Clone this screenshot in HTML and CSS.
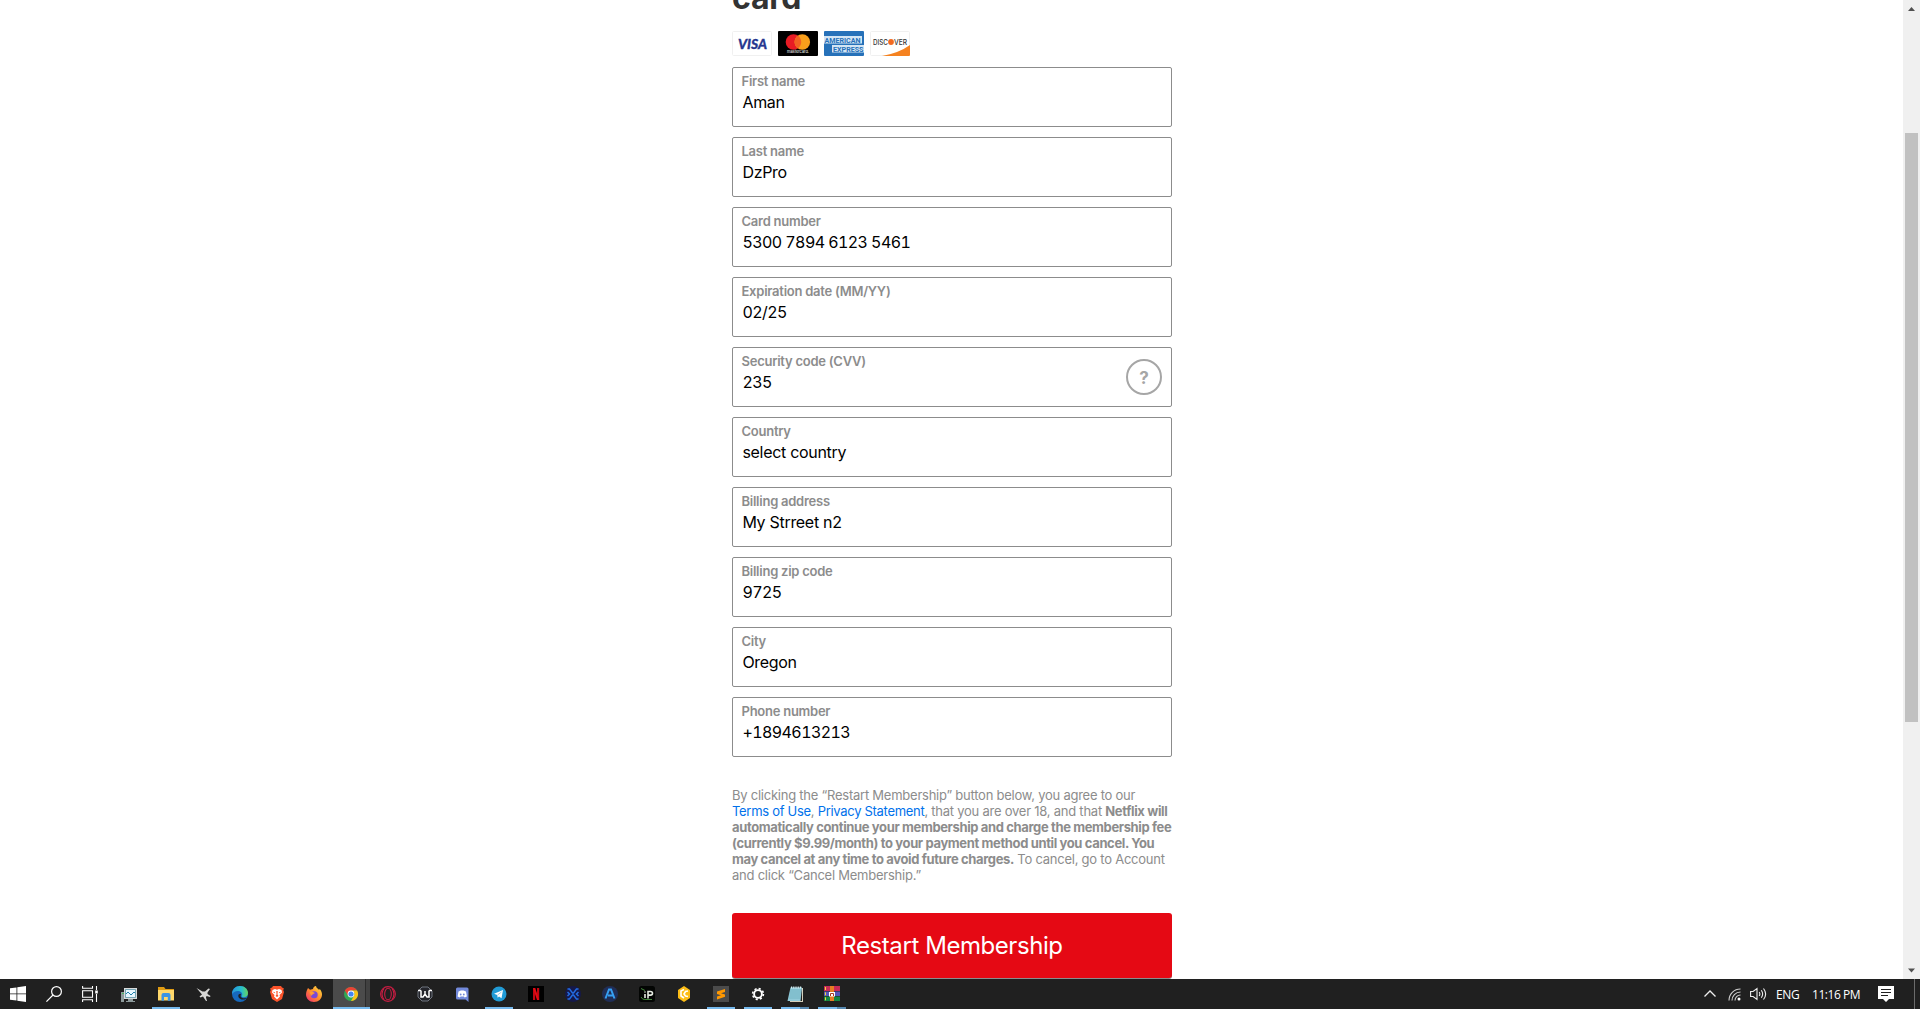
FILE: index.html
```html
<!DOCTYPE html>
<html lang="en">
<head>
<meta charset="utf-8">
<title>Restart Membership</title>
<link rel="stylesheet" href="styles.css">
</head>
<body>
<div class="browser">
<main class="content">
  <div class="column">
    <h1 class="title">card</h1>
    <div class="cards">
      <svg class="card" viewBox="0 0 40 25"><rect x=".5" y=".5" width="39" height="24" rx="1" fill="#fff" stroke="#f0f0f0"/><text x="6" y="17.500" class="visa" textLength="29" lengthAdjust="spacingAndGlyphs">VISA</text></svg>
      <svg class="card" viewBox="0 0 40 25"><rect width="40" height="25" rx="1"/><circle cx="15.500" cy="11" r="7.800" fill="#e81b24"/><circle cx="24.300" cy="11" r="7.800" fill="#f99f1b"/><path d="M19.900 4.600a7.800 7.800 0 0 1 0 12.800a7.800 7.800 0 0 1 0-12.800" fill="#f26122"/><text x="9" y="22.300" class="mastercard" textLength="22" lengthAdjust="spacingAndGlyphs">mastercard.</text></svg>
      <svg class="card" viewBox="0 0 40 25"><rect width="40" height="25" rx="1" fill="#2671b9"/><path d="M0 5H38V12.500H0zM8 14H40V21.500H8z" fill="#d3e5f4"/><text x=".5" y="11.800" class="amex" textLength="36" lengthAdjust="spacingAndGlyphs">AMERICAN</text><text x="9" y="20.700" class="amex" textLength="30.500" lengthAdjust="spacingAndGlyphs">EXPRESS</text></svg>
      <svg class="card" viewBox="0 0 40 25"><rect x=".5" y=".5" width="39" height="24" rx="1" fill="#fff" stroke="#f0f0f0"/><path d="M12 25Q29 22 40 14v10q0 1-1 1z" fill="#f58220"/><text x="3" y="13.700" class="discover" textLength="15" lengthAdjust="spacingAndGlyphs">DISC</text><circle cx="21" cy="11" r="2.900" fill="#f26a21"/><text x="24" y="13.700" class="discover" textLength="13" lengthAdjust="spacingAndGlyphs">VER</text></svg>
    </div>
    <div class="fields">
      <div class="field"><span class="label">First name</span><span class="value">Aman</span></div>
      <div class="field"><span class="label">Last name</span><span class="value">DzPro</span></div>
      <div class="field"><span class="label">Card number</span><span class="value digits">5300 7894 6123 5461</span></div>
      <div class="field"><span class="label">Expiration date (MM/YY)</span><span class="value digits">02/25</span></div>
      <div class="field"><span class="label">Security code (CVV)</span><span class="value digits">235</span><span class="help">?</span></div>
      <div class="field"><span class="label">Country</span><span class="value">select country</span></div>
      <div class="field"><span class="label">Billing address</span><span class="value">My Strreet n2</span></div>
      <div class="field"><span class="label">Billing zip code</span><span class="value digits">9725</span></div>
      <div class="field"><span class="label">City</span><span class="value">Oregon</span></div>
      <div class="field"><span class="label">Phone number</span><span class="value digits">+1894613213</span></div>
    </div>
    <p class="legal">By clicking the “Restart Membership” button below, you agree to our<br>
      <span class="link">Terms of Use</span>, <span class="link">Privacy Statement</span>, that you are over 18, and that <b>Netflix will<br>
      automatically continue your membership and charge the membership fee<br>
      (currently $9.99/month) to your payment method until you cancel. You<br>
      may cancel at any time to avoid future charges.</b> To cancel, go to Account<br>
      and click “Cancel Membership.”</p>
    <div class="button">Restart Membership</div>
  </div>
</main>
<div class="scrollbar">
  <svg width="17" height="17" viewBox="0 0 17 17"><path d="M5 11L8.500 7L12 11z" fill="#505050"/></svg>
  <div class="track"><div class="thumb"></div></div>
  <svg width="17" height="17" viewBox="0 0 17 17"><path d="M5 6.500h7L8.500 10.500z" fill="#505050"/></svg>
</div>
</div>
<div class="taskbar">
  <div class="system">
    <span class="cell"><svg viewBox="0 0 16 16"><path fill="#fff" d="M0 2.300L6.500 1.400V7.500H0zM7.300 1.300L16 0V7.500H7.300zM0 8.300H6.500V14.500L0 13.700zM7.300 8.300H16V16L7.300 14.700z"/></svg></span>
    <span class="cell"><svg viewBox="0 0 16 16"><g fill="none" stroke="#fff" stroke-width="1.200"><circle cx="10.500" cy="5.500" r="4.900"/><path d="M7 9L.4 15.600"/></g></svg></span>
    <span class="cell"><svg viewBox="0 0 16 16"><g fill="none" stroke="#fff" stroke-width="1.100"><path d="M.6 0v2.300H10.500V0M.6 4.800H10.500V11.200H.6zM.6 16v-2.300H10.500V16M14.500 0v4M14.500 8v8"/></g><path fill="#fff" d="M13.200 4.500h2.600v3h-2.600z"/></svg></span>
  </div>
  <div class="apps">
    <span class="cell"><svg viewBox="0 0 16 16"><path fill="#8e9b9c" d="M0 6h3v10H0zM7 13h5v2h2v1H5v-1h2z"/><path fill="#4ab35a" d="M1 7h2v1H1z"/><path fill="#d9dcdc" d="M3 2h13v11H3z"/><path fill="#e9f8ff" stroke="#48869b" stroke-width=".7" d="M4.500 3.500h10v8h-10z"/><path d="M5 8l2-2 3 3 3-3 1 1" fill="none" stroke="#2483ad"/></svg></span>
    <span class="cell open"><svg viewBox="0 0 16 16"><path fill="#e09c13" d="M0 1h6l1.500 2H16v3H0z"/><path fill="#ffd86b" d="M0 4h16v10.500H0z"/><path fill="#3b94e4" d="M3.500 14.800V9q0-2 2-2h5q2 0 2 2v5.800H9.800V11H6v3.800z"/></svg></span>
    <span class="cell"><svg viewBox="0 0 16 16"><path fill="#d7d7d5" d="M1.500 2L7.500 5.500L10 5.500L13.500 2.500L15 3L12.500 6.500L12.500 8L15.500 10L15 11L11.500 10L11 11.500L12 15L11 15L8 10.500L5.500 11.500L4.500 10.500L7 8.500z"/></svg></span>
    <span class="cell"><svg viewBox="0 0 16 16"><defs><linearGradient id="edge"><stop stop-color="#2694dc"/><stop offset=".6" stop-color="#28c0ca"/><stop offset="1" stop-color="#68d35a"/></linearGradient></defs><circle cx="8" cy="8" r="8" fill="#1769bd"/><path fill="url(#edge)" d="M0 8C0 3.500 3.500 0 8 0c5 0 8 3.500 8 7 0 3-2 4.300-4.300 4.300-1.700 0-2.700-.8-1.700-2C11 7.500 9 5 6 5 3 5 1 6.500 0 8"/><path fill="#202020" d="M9 8.500c-1.500 2 1 5 6 3.400L13.800 13C9.500 14.500 6 12.500 6.300 9.500 6.500 8 8.800 7 9 8.500"/></svg></span>
    <span class="cell"><svg viewBox="0 0 16 16"><path fill="#fb542b" d="M4 0h8l1 1.500 1.800.8-.5 2L15 6l-2 7-5 3-5-3L1 6l.7-1.700-.5-2L3 1.500z"/><path fill="#fff" d="M3.500 4L6 3l2 .7L10 3l2.500 1L13 6.500 10.500 9l.5 1.500-3 3-3-3L5.500 9 3 6.500z"/><path fill="#fb542b" d="M7.300 5h1.400L8.500 8.500 9.500 10 8 11 6.500 10l1-1.500zM4.300 5.700l2 .6-1.300.9zM11.700 5.700l-2 .6 1.300.9z"/></svg></span>
    <span class="cell"><svg viewBox="0 0 16 16"><defs><linearGradient id="ff" x1="1" y1="0" x2="0" y2="1"><stop stop-color="#ffe743"/><stop offset=".5" stop-color="#ff8b2b"/><stop offset="1" stop-color="#ee237a"/></linearGradient></defs><path fill="url(#ff)" d="M2 2l2 1.800L7 3C7 1.500 8.500 0 10 0l.5 1.500C11.500 2.500 12.500 3 13 4l.8-1C15.500 5 16 7 16 8.500 16 13 12.500 16 8 16S0 12.500 0 8.500C0 6 1 4 2 2"/><circle cx="8.200" cy="8.700" r="3.500" fill="#7949d8"/><path fill="#ff9c32" d="M3.500 5.500l3 .2L9 7 6.500 8.500 5 10z"/></svg></span>
    <span class="cell active"><svg viewBox="0 0 16 16"><circle cx="8" cy="8" r="7" fill="#31a853"/><path fill="#ea4335" d="M1.900 4.500A7 7 0 0 1 14.100 4.500H8L5 9.800z"/><path fill="#fbc116" d="M14.100 4.500A7 7 0 0 1 8 15l3-5.200a3.500 3.500 0 0 0-3-5.300z"/><circle cx="8" cy="8" r="3.400" fill="#fff"/><circle cx="8" cy="8" r="2.600" fill="#4285f4"/></svg></span>
    <span class="cell"><svg viewBox="0 0 16 16"><g fill="none" stroke="#c91d43" stroke-width="1.100"><circle cx="8" cy="8" r="7.400"/><ellipse cx="8" cy="8" rx="3.300" ry="5.800"/><path d="M4 2.500Q0 8 4 13.500M12 2.500Q16 8 12 13.500"/></g></svg></span>
    <span class="cell"><svg viewBox="0 0 16 16"><path fill="#24252b" stroke="#79808b" stroke-width=".9" d="M5 1h6l4 4v6l-4 4H5l-4-4V5z"/><path d="M1 4.500h3M12 4.500h3M4 4.500V11h2l2-3 2 3h2V4.500M8 5v3" fill="none" stroke="#fff" stroke-width="1.500"/></svg></span>
    <span class="cell"><svg viewBox="0 0 16 16"><path fill="#7289da" d="M3.500 1.500h9.500q1.500 0 1.500 1.500v13l-3-2.500h-8Q2 13.500 2 12V3q0-1.500 1.500-1.500"/><path fill="#fff" d="M4.500 5.500L7 4.600h2.500l2.500.9.900 5-2.200 1-.8-1H6.600l-.8 1-2.200-1z"/><circle cx="6.700" cy="8.500" r=".9" fill="#7289da"/><circle cx="9.800" cy="8.500" r=".9" fill="#7289da"/></svg></span>
    <span class="cell open"><svg viewBox="0 0 16 16"><circle cx="8" cy="8" r="7.500" fill="#219bd6"/><path fill="#fff" d="M3 7.800L12 4l-1.500 8.300L8 10.500l-1.300 1.200-.5-2.700z"/><path d="M6.500 9L10.500 6" stroke="#9ccbe5"/></svg></span>
    <span class="cell"><svg viewBox="0 0 16 16"><path d="M0 0h16v16H0z"/><path fill="#c10711" d="M5 2h2.200v12H5zM9 2h2.200v12H9z"/><path fill="#e50914" d="M5 2h2.200l4 12H9z"/></svg></span>
    <span class="cell"><svg viewBox="0 0 16 16"><circle cx="8" cy="8" r="8" fill="#15194a"/><g fill="none" stroke="#236ce2" stroke-width="1.500"><path d="M2.500 3h2l3 4h1l3-4h2M2.500 13h2l3-4h1l3 4h2M2.500 6l2 2-2 2M13.500 6l-2 2 2 2"/></g></svg></span>
    <span class="cell"><svg viewBox="0 0 16 16"><circle cx="8" cy="8" r="8" fill="#202e57"/><path d="M3.500 12.500L7 3.500h2l3.500 9M6 9.500h5" fill="none" stroke="#36a0f3" stroke-width="2"/></svg></span>
    <span class="cell"><svg viewBox="0 0 16 16"><rect width="16" height="16" rx="2.500" fill="#030503"/><path d="M6 5.500v1M6 8v4M9 12.500V5.500h2.500q2 0 2 1.800t-2 1.800H9" fill="none" stroke="#e5eae1" stroke-width="1.600"/><path d="M2 2.500l4 2M2 11q1 3 5 2.500h6" stroke="#438a3c" fill="none"/></svg></span>
    <span class="cell"><svg viewBox="0 0 16 16"><path fill="#fdbd16" d="M8 0l6 4v8l-6 4-6-4V4z"/><path fill="none" stroke="#fff" stroke-width="1.600" d="M8 3.500L5 5v5l3 2M12 5L9.500 5.500 8 8l1.500 2 2.500.5"/></svg></span>
    <span class="cell open"><svg viewBox="0 0 16 16"><path fill="#4b4b4b" d="M0 0h16v16H0z"/><path fill="#ff9800" d="M4 5.500L12 3v3L8 7.300l4 1.300v2.200L4 13.500v-3l4-1.200-4-1.300z"/></svg></span>
    <span class="cell open"><svg viewBox="0 0 16 16"><circle cx="8" cy="8" r="3.900" fill="none" stroke="#fff" stroke-width="1.900"/><circle cx="8" cy="8" r="5.400" fill="none" stroke="#fff" stroke-width="1.600" stroke-dasharray="2.120 2.120"/></svg></span>
    <span class="cell open stacked"><svg viewBox="0 0 16 16"><path fill="#d5d1be" d="M3 15h12V2h1v14H3z"/><path fill="#91cad9" d="M3.500 1.500H15L13.500 15H.5z"/><path stroke="#569eaf" stroke-width=".5" d="M3 4h11M3 6h11M2.500 8h11M2.500 10h11M2 12h11"/><path stroke="#d8eff4" stroke-dasharray="1 .8" stroke-width="2" d="M4 1.500h11"/></svg></span>
    <span class="cell open stacked"><svg viewBox="0 0 16 16"><path fill="#c72b57" d="M0 0h16v5H0z"/><path fill="#5455b8" d="M0 5.500h16v4.500H0z"/><path fill="#138643" d="M0 10.500h16V15H0z"/><path fill="#e77d23" d="M6 0h4v15H6z"/><path d="M1.500 1v3M1.500 6.300v3M1.500 11.300v3" stroke="#f7d33d"/><path fill="#fff" d="M5 6h6v4.500H5z"/><path fill="none" stroke="#a63b24" d="M6.500 10V7.500h3V10"/></svg></span>
  </div>
  <div class="tray">
    <svg width="12" height="16" viewBox="0 0 12 16"><path d="M.5 10.500L6 5l5.500 5.500" fill="none" stroke="#eee" stroke-width="1.300"/></svg>
    <svg width="13" height="16" viewBox="0 0 13 16"><g fill="none" stroke="#d0d0d0" stroke-width="1.100"><path d="M1 14.500C1 8 6 3 12.500 3M4 14.500C4 10 7.500 6 12.500 6M7 14.500c0-3 2.500-5.500 5.500-5.500"/></g><circle cx="11" cy="13" r="1.500" fill="#fff"/></svg>
    <svg width="17" height="16" viewBox="0 0 17 16"><g fill="none" stroke="#eee" stroke-width="1.100"><path d="M.6 5.500h2.500L7 2.500v11L3.100 10.500H.6zM9.200 6q1.300 2 0 4M11.300 4.200q2.700 3.800 0 7.600M13.500 2.500q4.300 5.500 0 11"/></g></svg>
    <span class="lang">ENG</span>
    <span class="clock">11:16 PM</span>
    <svg width="16" height="16" viewBox="0 0 16 16"><path fill="#fff" d="M0 0h16v13h-5l-3 3-3-3H0z"/><path d="M3 3.500h10M3 6.500h10M3 9.500h7" stroke="#202020"/></svg>
    <span class="peek"></span>
  </div>
</div>
</body>
</html>
```
FILE: styles.css
```css
body {
  margin: 0;
  width: 1920px;
  height: 1009px;
  overflow: hidden;
  display: flex;
  flex-direction: column;
  background: #fff;
  font-family: Inter, sans-serif;
}

.browser { flex: 1; min-height: 0; display: flex; overflow: hidden; }
.content { flex: 1; padding-left: 732px; overflow: hidden; }
.column { width: 440px; }

.title {
  margin: -22px 0 0;
  font-size: 32px;
  line-height: 40px;
  letter-spacing: -0.2px;
  color: #333;
}

.cards { display: flex; gap: 6px; margin: 13px 0 11px; }
.card { display: block; width: 40px; height: 25px; }
.visa { font: italic 900 13px Lato, sans-serif; fill: #26368f; stroke: #26368f; stroke-width: 0.3px; }
.mastercard { font: 4px Inter, sans-serif; fill: #fff; }
.amex { font: bold 8px Roboto, sans-serif; fill: #2671b9; }
.discover { font: 500 7px Inter, sans-serif; fill: #333; }

.fields { display: grid; gap: 10px; }
.field {
  position: relative;
  box-sizing: border-box;
  height: 60px;
  padding: 5px 9px;
  border: 1px solid #8c8c8c;
  border-radius: 2px;
  display: flex;
  flex-direction: column;
  align-items: flex-start;
}
.label {
  margin-left: -0.5px;
  font-weight: 600;
  font-size: 13px;
  line-height: 17px;
  letter-spacing: -0.25px;
  color: #8c8c8c;
}
.value { margin-left: 0.4px; font-size: 16px; line-height: 24px; letter-spacing: -0.3px; color: #000; }
.digits { font-variant-numeric: tabular-nums; letter-spacing: -0.58px; }
.help {
  position: absolute;
  right: 9px;
  top: 11px;
  box-sizing: border-box;
  width: 36px;
  height: 36px;
  border: 2px solid #a6a6a6;
  border-radius: 50%;
  text-align: center;
  font-weight: 700;
  font-size: 17px;
  line-height: 34px;
  color: #a6a6a6;
}

.legal {
  margin: 30px 0;
  font-size: 13px;
  line-height: 16px;
  letter-spacing: -0.24px;
  white-space: nowrap;
  color: #8c8c8c;
}
.legal b { font-weight: 700; letter-spacing: -0.37px; }
.link { color: #0071eb; letter-spacing: -0.3px; }

.button {
  height: 65px;
  border-radius: 3px;
  box-shadow: 0 1px 0 rgba(0, 0, 0, 0.45);
  background: #e50914;
  color: #fff;
  font-size: 24px;
  line-height: 66px;
  letter-spacing: -0.43px;
  text-align: center;
}

.scrollbar { width: 17px; background: #f0f0f0; display: flex; flex-direction: column; }
.track { flex: 1; padding: 116px 2px 0; }
.thumb { height: 589px; background: #c1c1c1; }

.taskbar {
  height: 30px;
  background: #202020;
  display: flex;
}
.system { display: flex; width: 111px; }
.apps { display: flex; flex: 1; }
.cell {
  box-sizing: border-box;
  width: 37px;
  height: 30px;
  padding: 7px 11px 0 10px;
}
.system .cell { width: 36px; padding: 7px 10px 0; }
.cell svg { display: block; width: 16px; height: 16px; }
.open { background: linear-gradient(#76b9ed, #76b9ed) 4px 28px / 28px 2px no-repeat; }
.stacked { background: linear-gradient(90deg, #76b9ed 19px, #5688b0 19px) 4px 28px / 28px 2px no-repeat; }
.active {
  background:
    linear-gradient(#76b9ed, #76b9ed) 0 28px / 100% 2px no-repeat,
    linear-gradient(90deg, #4b4b4b 32px, #2c2c2c 32px, #2c2c2c 33px, #414141 33px);
}

.tray {
  width: 216px;
  display: flex;
  align-items: center;
  color: #fff;
  font: 12px "Open Sans", sans-serif;
}
.tray svg:nth-child(2) { margin-left: 12px; }
.tray svg:nth-child(3) { margin-left: 9px; }
.lang { margin-left: 9px; width: 24px; letter-spacing: -0.4px; }
.clock { margin: 0 18px 0 12px; width: 48px; white-space: nowrap; letter-spacing: -0.45px; }
.peek { margin-left: 20px; width: 1px; height: 30px; background: #6b6b6b; }
```
